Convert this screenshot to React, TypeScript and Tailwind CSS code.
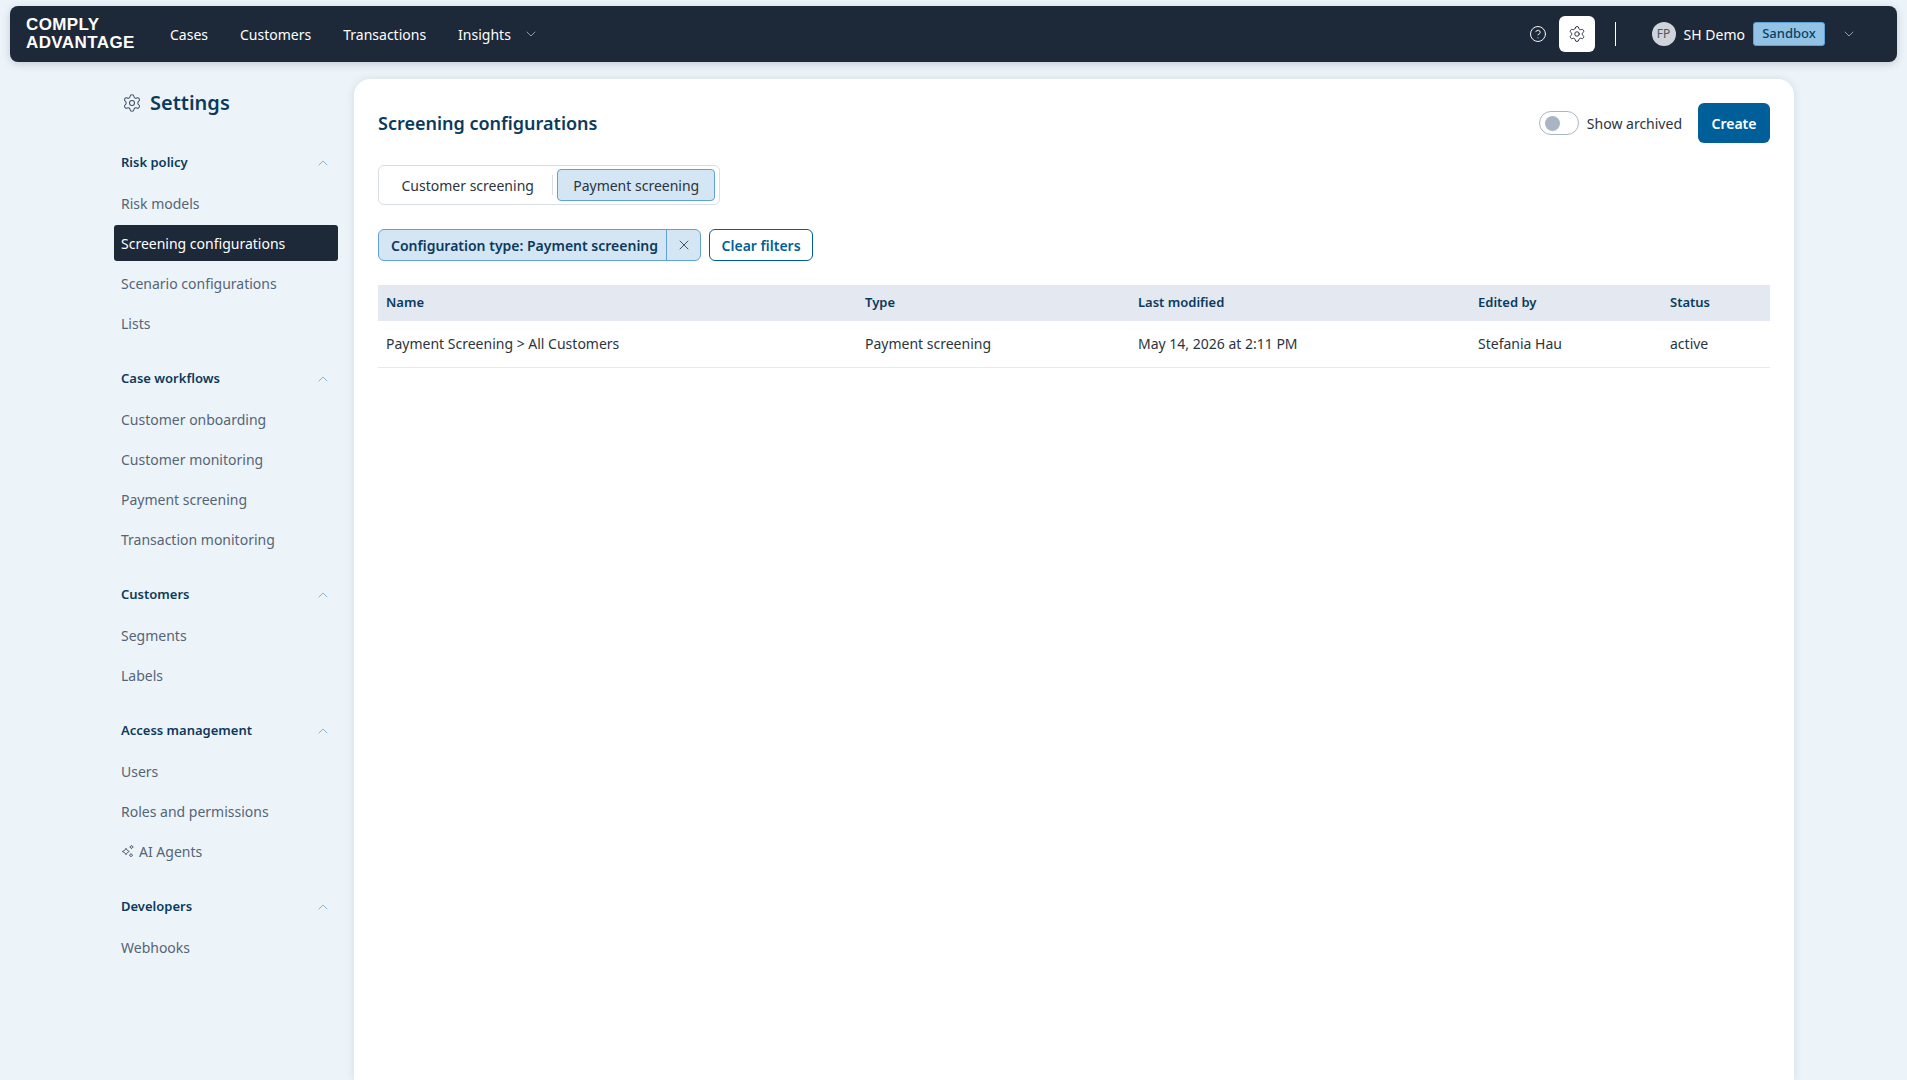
import React from 'react';
import { ChevronDown, ChevronUp, CircleHelp, Settings, X } from 'lucide-react';

const sections = [
  { title: 'Risk policy', items: ['Risk models', 'Screening configurations', 'Scenario configurations', 'Lists'] },
  { title: 'Case workflows', items: ['Customer onboarding', 'Customer monitoring', 'Payment screening', 'Transaction monitoring'] },
  { title: 'Customers', items: ['Segments', 'Labels'] },
  { title: 'Access management', items: ['Users', 'Roles and permissions', 'AI Agents'] },
  { title: 'Developers', items: ['Webhooks'] },
];

const SparkleIcon = () => (
  <svg width="14" height="14" viewBox="0 0 14 14" fill="none" stroke="currentColor" strokeWidth="1" strokeLinejoin="round">
    <path d="M5 4.2 L6.2 6.3 L8.3 7.5 L6.2 8.7 L5 10.8 L3.8 8.7 L1.2 7.5 L3.8 6.3 Z" />
    <path d="M10.5 1.2 L11.1 2.4 L12.3 3 L11.1 3.6 L10.5 4.8 L9.9 3.6 L8.7 3 L9.9 2.4 Z" />
    <path d="M10 9.5 L10.6 10.6 L11.7 11.2 L10.6 11.8 L10 12.9 L9.4 11.8 L8.3 11.2 L9.4 10.6 Z" />
  </svg>
);

const Header = () => (
  <header className="mx-[10px] mt-[6px] flex h-[56px] shrink-0 items-center rounded-[8px] bg-[#1d2939] pl-4 pr-[40px] text-white shadow-[0_2px_8px_rgba(30,41,59,0.2)]">
    <div className="w-[144px] font-['Liberation_Sans',sans-serif] text-[17px] font-bold leading-[18px] tracking-[0.4px]">
      <div>COMPLY</div>
      <div>ADVANTAGE</div>
    </div>
    <nav className="flex items-center gap-8 text-[14px]">
      <span>Cases</span>
      <span>Customers</span>
      <span>Transactions</span>
      <span className="flex items-center gap-3">
        Insights
        <ChevronDown className="h-4 w-4 text-[#a3b1c2]" strokeWidth={1.25} />
      </span>
    </nav>
    <div className="ml-auto flex items-center">
      <CircleHelp className="mr-[12px] h-[18px] w-[18px]" strokeWidth={1.25} />
      <span className="flex h-9 w-9 items-center justify-center rounded-[6px] bg-white text-[#1d2939]">
        <Settings className="h-[18px] w-[18px]" strokeWidth={1.25} />
      </span>
      <span className="mx-5 h-6 w-px bg-white" />
      <span className="ml-4 flex h-6 w-6 items-center justify-center rounded-full bg-[#ced4da] text-[12px] text-[#4a5565]">FP</span>
      <span className="ml-2 text-[14px]">SH Demo</span>
      <span className="ml-2 flex h-6 w-[72px] items-center justify-center rounded-[3px] border border-[#5fa3d6] bg-[#93c3e4] text-[13px] font-medium text-[#0b3f63]">Sandbox</span>
      <ChevronDown className="ml-4 h-4 w-4 text-[#a3b1c2]" strokeWidth={1.25} />
    </div>
  </header>
);

const Sidebar = () => (
  <aside className="w-[224px] shrink-0 text-[14px]">
    <div className="flex h-[48px] items-center gap-2 pl-2">
      <Settings className="h-5 w-5 text-[#3d4f63]" strokeWidth={1.25} />
      <span className="text-[20px] font-semibold text-[#0b3a5c]">Settings</span>
    </div>
    <div className="mt-[16px] flex flex-col gap-4">
      {sections.map((s) => (
        <div key={s.title}>
          <div className="flex h-10 items-center justify-between px-[7px]">
            <span className="text-[13px] font-semibold text-[#0b3a5c]">{s.title}</span>
            <ChevronUp className="h-4 w-4 text-[#6ea6cf]" strokeWidth={1.25} />
          </div>
          <div className="flex flex-col">
            {s.items.map((item) =>
              item === 'Screening configurations' ? (
                <div key={item} className="my-[2px] flex h-9 items-center rounded-[3px] bg-[#1d2939] px-[7px] text-white">
                  {item}
                </div>
              ) : (
                <div key={item} className="flex h-10 items-center gap-1 px-[7px] text-[#556476]">
                  {item === 'AI Agents' && <SparkleIcon />}
                  {item}
                </div>
              ),
            )}
          </div>
        </div>
      ))}
    </div>
  </aside>
);

const rows = [['Payment Screening > All Customers', 'Payment screening', 'May 14, 2026 at 2:11 PM', 'Stefania Hau', 'active']];
const headers = ['Name', 'Type', 'Last modified', 'Edited by', 'Status'];

const Card = () => (
  <main className="ml-[16px] flex w-[1440px] flex-col rounded-t-[16px] bg-white p-6 text-[14px] text-[#2b3440] shadow-[0_0_8px_rgba(30,41,59,0.12)]">
    <div className="flex h-10 items-center justify-between">
      <h1 className="text-[18px] font-semibold text-[#0b3a5c]">Screening configurations</h1>
      <div className="flex items-center">
        <span className="flex h-6 w-10 items-center rounded-full border border-[#a9b5c4] pl-[5px]">
          <span className="h-[15px] w-[15px] rounded-full bg-[#a9b5c4]" />
        </span>
        <span className="ml-2 text-[14px]">Show archived</span>
        <button className="ml-4 h-10 w-[72px] rounded-[6px] bg-[#005f99] text-[14px] font-semibold text-white">Create</button>
      </div>
    </div>

    <div className="mt-[22px] flex h-10 w-[342px] items-center rounded-[6px] border border-[#d8dee6] pl-[4px] pr-[4px]">
      <span className="flex w-[171px] justify-center">Customer screening</span>
      <span className="h-[20px] w-px bg-[#d8dee6]" />
      <span className="ml-[4px] flex h-8 w-[159px] items-center justify-center rounded-[4px] border border-[#5fa3d6] bg-[#d4e5f3]">Payment screening</span>
    </div>

    <div className="mt-[24px] flex items-center gap-2">
      <span className="flex h-8 items-center rounded-[6px] border border-[#5fa3d6] bg-[#d4e5f3] font-semibold text-[#0b3a5c]">
        <span className="px-3 pr-2">Configuration type: Payment screening</span>
        <span className="flex h-full w-[34px] items-center justify-center border-l border-[#5fa3d6]">
          <X className="h-4 w-4 text-[#2b3440]" strokeWidth={1.25} />
        </span>
      </span>
      <button className="h-8 w-[104px] rounded-[6px] border border-[#005f99] font-semibold text-[#005f99]">Clear filters</button>
    </div>

    <table className="mt-[24px] w-full table-fixed border-collapse">
      <colgroup>
        <col className="w-[479px]" />
        <col className="w-[273px]" />
        <col className="w-[340px]" />
        <col className="w-[192px]" />
        <col />
      </colgroup>
      <thead>
        <tr className="h-9 bg-[#e4e8f0]">
          {headers.map((h) => (
            <th key={h} className="px-2 text-left text-[13px] font-semibold text-[#0b3a5c]">{h}</th>
          ))}
        </tr>
      </thead>
      <tbody>
        {rows.map((r) => (
          <tr key={r[0]} className="h-[46px] border-b border-[#e4e8f0]">
            {r.map((c) => (
              <td key={c} className="px-2">{c}</td>
            ))}
          </tr>
        ))}
      </tbody>
    </table>
  </main>
);

export default function App() {
  return (
    <div className="flex h-screen flex-col overflow-hidden bg-[#edf4f9] font-['Noto_Sans',sans-serif]">
      <Header />
      <div className="mt-[17px] flex min-h-0 flex-1 pl-[114px]">
        <Sidebar />
        <Card />
      </div>
    </div>
  );
}
